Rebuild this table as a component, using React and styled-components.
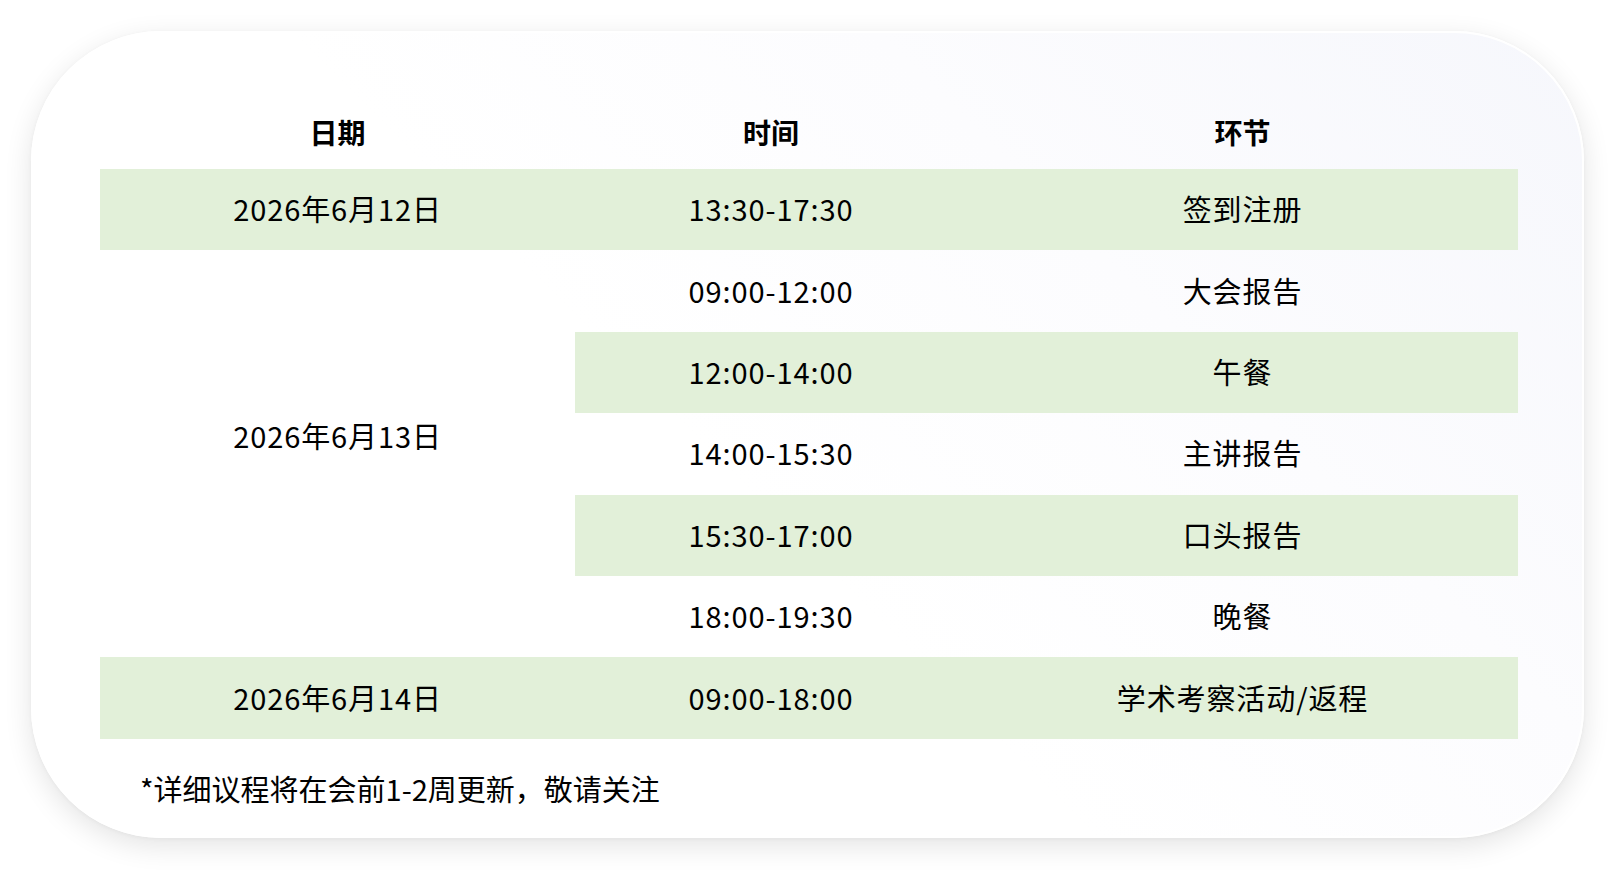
import React from 'react';
import styled, { createGlobalStyle } from 'styled-components';

const GlobalStyle = createGlobalStyle`
    html, body {
        margin: 0;
        padding: 0;
        background: #ffffff;
    }
    body {
        font-family: "Noto Sans CJK SC", "Noto Sans", sans-serif;
        color: #000;
    }
`

const Page = styled.div`
    width: 1624px;
    height: 879px;
    padding: 31px 0 0 31px;
    box-sizing: border-box;
`

const Card = styled.div`
    width: 1553px;
    height: 807px;
    box-sizing: border-box;
    border: 2px solid #ffffff;
    border-radius: 130px;
    background: linear-gradient(225deg, #f6f7fc 0%, #fcfcfe 30%, #ffffff 55%);
    box-shadow: 0 8px 28px rgba(0, 0, 0, 0.11), 0 1px 4px rgba(0, 0, 0, 0.04);
    padding: 64px 64px 0 67px;
`

const Table = styled.div`
    display: grid;
    grid-template-columns: 475px 392px 551px;
    grid-auto-rows: 81.4px;
    grid-template-rows: 72px;
`

const HeadCell = styled.div`
    display: flex;
    align-items: center;
    justify-content: center;
    font-size: 28px;
    font-weight: 700;
    padding-bottom: 2px;
`

const Cell = styled.div`
    display: flex;
    align-items: center;
    justify-content: center;
    font-size: 29px;
    font-weight: 400;
    letter-spacing: 0.9px;
    padding-bottom: ${p => (p.$span > 1 ? '38px' : '3px')};
    background: ${p => (p.$green ? '#e2f0d9' : 'transparent')};
    grid-row: ${p => (p.$span ? `span ${p.$span}` : 'auto')};
`

const Note = styled.div`
    font-size: 29px;
    padding: 28px 0 0 40px;
    line-height: 42px;
`

const rows = [
    { date: '2026年6月12日', time: '13:30-17:30', item: '签到注册', green: true, span: 1 },
    { date: '2026年6月13日', time: '09:00-12:00', item: '大会报告', green: false, span: 5 },
    { time: '12:00-14:00', item: '午餐', green: true },
    { time: '14:00-15:30', item: '主讲报告', green: false },
    { time: '15:30-17:00', item: '口头报告', green: true },
    { time: '18:00-19:30', item: '晚餐', green: false },
    { date: '2026年6月14日', time: '09:00-18:00', item: '学术考察活动/返程', green: true, span: 1 },
]

function App() {
    return (
        <Page>
            <GlobalStyle />
            <Card>
                <Table>
                    <HeadCell>日期</HeadCell>
                    <HeadCell>时间</HeadCell>
                    <HeadCell>环节</HeadCell>
                    {rows.map((r, i) => (
                        <React.Fragment key={i}>
                            {r.date && (
                                <Cell $green={r.span === 1 && r.green} $span={r.span}>{r.date}</Cell>
                            )}
                            <Cell $green={r.green}>{r.time}</Cell>
                            <Cell $green={r.green}>{r.item}</Cell>
                        </React.Fragment>
                    ))}
                </Table>
                <Note>*详细议程将在会前1-2周更新，敬请关注</Note>
            </Card>
        </Page>
    )
}

export default App;
